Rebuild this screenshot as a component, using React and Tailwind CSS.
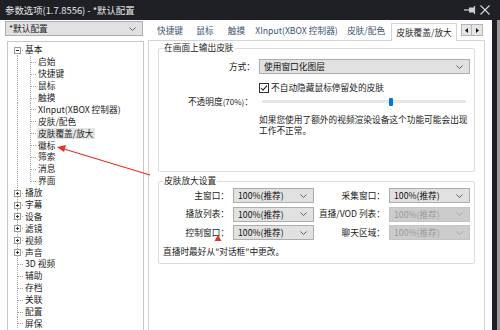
import React from 'react';

const tree = [
  { t: '基本', lvl: 0, box: 'minus', first: true },
  { t: '启始', lvl: 1 },
  { t: '快捷键', lvl: 1 },
  { t: '鼠标', lvl: 1 },
  { t: '触摸', lvl: 1 },
  { t: 'XInput(XBOX 控制器)', lvl: 1 },
  { t: '皮肤/配色', lvl: 1 },
  { t: '皮肤覆盖/放大', lvl: 1, sel: true },
  { t: '徽标', lvl: 1 },
  { t: '筛索', lvl: 1 },
  { t: '消息', lvl: 1 },
  { t: '界面', lvl: 1, last: true },
  { t: '播放', lvl: 0, box: 'plus' },
  { t: '字幕', lvl: 0, box: 'plus' },
  { t: '设备', lvl: 0, box: 'plus' },
  { t: '滤镜', lvl: 0, box: 'plus' },
  { t: '视频', lvl: 0, box: 'plus' },
  { t: '声音', lvl: 0, box: 'plus' },
  { t: '3D 视频', lvl: 0 },
  { t: '辅助', lvl: 0 },
  { t: '存档', lvl: 0 },
  { t: '关联', lvl: 0 },
  { t: '配置', lvl: 0 },
  { t: '屏保', lvl: 0 },
];

const tabs = [
  { t: '快捷键', w: 'w-[38px]' },
  { t: '鼠标', w: 'w-[32px]' },
  { t: '触摸', w: 'w-[31px]' },
  { t: 'XInput(XBOX 控制器)', w: 'w-[89px]' },
  { t: '皮肤/配色', w: 'w-[50px]' },
];

function Gutter({ lvl, box, first, last }) {
  const w = lvl ? 29 : 16;
  const dot = { stroke: '#a3a3a3', strokeDasharray: '1 1' };
  return (
    <svg width={w} height="12" className="shrink-0">
      <line x1="9.5" y1={first ? 7 : 0} x2="9.5" y2="12" {...dot} />
      {lvl === 0 && <line x1="10" y1="6.5" x2="16" y2="6.5" {...dot} />}
      {lvl === 1 && (
        <>
          <line x1="22.5" y1="0" x2="22.5" y2={last ? 7 : 12} {...dot} />
          <line x1="23" y1="6.5" x2="29" y2="6.5" {...dot} />
        </>
      )}
      {box && (
        <>
          <rect x="6.5" y="3.5" width="6" height="6" fill="#fff" stroke="#9a9a9a" />
          <line x1="8" y1="6.5" x2="11" y2="6.5" stroke="#333" />
          {box === 'plus' && <line x1="9.5" y1="5" x2="9.5" y2="8" stroke="#333" />}
        </>
      )}
    </svg>
  );
}

function Chevron({ color = '#606060' }) {
  return (
    <svg width="7" height="4" className="shrink-0">
      <path d="M0.5 0.5 L3.5 3.5 L6.5 0.5" fill="none" stroke={color} />
    </svg>
  );
}

function Select({ text, w, disabled }) {
  return (
    <div
      className={
        'flex items-center justify-between h-[15px] pl-[4px] pr-[6px] border ' +
        w +
        (disabled ? ' bg-[#cccccc] border-[#c4c4c4] text-[#9a9a9a]' : ' bg-[#e1e1e1] border-[#adadad] text-[#111]')
      }
    >
      <span className="leading-[13px]">{text}</span>
      <Chevron color={disabled ? '#a8a8a8' : '#606060'} />
    </div>
  );
}

export default function App() {
  return (
    <div className="relative w-[500px] h-[330px] overflow-hidden bg-white flex flex-col font-['Noto_Sans_CJK_SC',sans-serif] text-[8.7px] text-[#1a1a1a]">
      {/* title bar */}
      <div className="h-[20px] shrink-0 bg-[#1e2026] flex items-center justify-between pl-[5px] pr-[10px] text-[#e8e8e8] text-[9.4px]">
        <span>参数选项(1.7.8556) - *默认配置</span>
        <div className="flex items-center gap-[4px]">
          <svg width="12" height="8">
            <path d="M0 4 H5" stroke="#cfcfcf" strokeWidth="1.2" />
            <rect x="5" y="1.5" width="5" height="5" fill="#cfcfcf" />
            <path d="M10.5 0 V8" stroke="#cfcfcf" strokeWidth="1.2" />
          </svg>
          <svg width="10" height="10">
            <path d="M0.5 0.5 L9.5 9.5 M9.5 0.5 L0.5 9.5" stroke="#d8d8d8" strokeWidth="1.1" />
          </svg>
        </div>
      </div>

      <div className="flex flex-1 min-h-0">
        {/* left column */}
        <div className="w-[148px] shrink-0 pl-[5px] pt-[1px] flex flex-col">
          <div className="w-[138px] h-[15px] bg-[#e1e1e1] border border-[#adadad] flex items-center justify-between pl-[3px] pr-[6px]">
            <span className="leading-[13px]">*默认配置</span>
            <Chevron />
          </div>
          <div className="ml-[2px] mt-[5px] w-[137px] flex-1 border border-b-0 border-[#c8c8c8] pt-[2px]">
            {tree.map((r, i) => (
              <div key={i} className="flex items-center h-[11.9px]">
                <Gutter {...r} />
                <span className={'leading-[11px] px-[1px] whitespace-nowrap ' + (r.sel ? 'bg-[#e5e5e5]' : '')}>{r.t}</span>
              </div>
            ))}
          </div>
        </div>

        {/* tabs + page */}
        <div className="w-[337px] shrink-0 flex flex-col">
          <div className="h-[20px] shrink-0 flex items-end pl-[3px] relative z-10">
            {tabs.map((t) => (
              <div key={t.t} className={'h-[18px] flex items-center justify-center text-[#3b5371] whitespace-nowrap ' + t.w}>
                {t.t}
              </div>
            ))}
            <div className="w-[66px] h-[18px] -mb-px bg-white border border-b-0 border-[#d4d4d4] flex items-center justify-center whitespace-nowrap">
              皮肤覆盖/放大
            </div>
            <div className="ml-[4px] mb-[4px] flex self-end">
              <div className="w-[11px] h-[12px] bg-[#e6e6e6] border border-[#b5b5b5] flex items-center justify-center">
                <svg width="3" height="5"><path d="M3 0 L0 2.5 L3 5 Z" fill="#111" /></svg>
              </div>
              <div className="w-[11px] h-[12px] bg-[#e6e6e6] border border-l-0 border-[#b5b5b5] flex items-center justify-center">
                <svg width="3" height="5"><path d="M0 0 L3 2.5 L0 5 Z" fill="#111" /></svg>
              </div>
            </div>
          </div>

          <div className="flex-1 border border-b-0 border-[#d4d4d4] pl-[9px] pt-[1px]">
            <fieldset className="w-[317px] h-[130px] border border-[#dcdcdc] rounded-[2px]">
              <legend className="ml-[4px] px-[1px] leading-[12px]">在画面上输出皮肤</legend>
              <div className="pt-[5px] flex flex-col">
                <div className="flex items-center h-[15px]">
                  <div className="w-[97px] text-right pr-[1px]">方式：</div>
                  <div className="ml-[3px]">
                    <Select text="使用窗口化图层" w="w-[211px]" />
                  </div>
                </div>
                <div className="flex items-center h-[12px] mt-[8px] pl-[100px]">
                  <svg width="10" height="10" className="shrink-0">
                    <rect x="0.5" y="0.5" width="9" height="9" fill="#fff" stroke="#333" />
                    <path d="M2 5 L4 7.2 L8 2.6" fill="none" stroke="#222" strokeWidth="1.1" />
                  </svg>
                  <span className="ml-[2px] leading-[12px]">不自动隐藏鼠标停留处的皮肤</span>
                </div>
                <div className="flex items-center h-[13px] mt-[1px]">
                  <div className="w-[97px] text-right pr-[3px] whitespace-nowrap">
                    不透明度<span className="text-[8px]">(70%)</span>：
                  </div>
                  <div className="ml-[6px] relative w-[204px] h-[10px] flex items-center">
                    <div className="w-full h-[3px] bg-[#e7e7e7]" />
                    <div className="absolute left-[127px] top-[1px] w-[4px] h-[8px] bg-[#0078d7] rounded-[1px]" />
                  </div>
                </div>
                <div className="mt-[6px] pl-[100px] leading-[11px] w-[312px]">
                  如果您使用了额外的视频渲染设备这个功能可能会出现工作不正常。
                </div>
              </div>
            </fieldset>

            <fieldset className="mt-[3px] w-[317px] h-[89px] border border-[#dcdcdc] rounded-[2px]">
              <legend className="ml-[4px] px-[1px] leading-[12px]">皮肤放大设置</legend>
              <div className="pt-[1px] flex flex-col gap-[3.5px]">
                {[
                  ['主窗口：', '采集窗口：', false],
                  ['播放列表：', '直播/VOD 列表：', true],
                  ['控制窗口：', '聊天区域：', true],
                ].map(([a, b, dis]) => (
                  <div key={a} className="flex items-center h-[15px]">
                    <div className="w-[74px] text-right pr-[4px] whitespace-nowrap">{a}</div>
                    <Select text="100%(推荐)" w="w-[81px]" />
                    <div className="w-[75px] text-right pr-[4px] whitespace-nowrap">{b}</div>
                    <Select text="100%(推荐)" w="w-[81px]" disabled={dis} />
                  </div>
                ))}
              </div>
              <div className="mt-[5.5px] pl-[4px] leading-[11px]">直播时最好从"对话框"中更改。</div>
            </fieldset>
          </div>
        </div>

        {/* right edge */}
        <div className="w-[7px] shrink-0 bg-white" />
        <div className="w-[5px] shrink-0 bg-[#1e2026]" />
        <div className="w-[3px] shrink-0 bg-[#9a9a9a]" />
      </div>

      {/* red annotation arrows */}
      <svg className="absolute left-0 top-0 pointer-events-none" width="500" height="330">
        <line x1="150" y1="175" x2="64" y2="149" stroke="#e8302a" strokeWidth="1.3" />
        <path d="M57 147 L66 145 L64 152 Z" fill="#e8302a" />
        <path d="M218 235 L221.5 241 L214.5 241 Z" fill="#e8302a" />
      </svg>
    </div>
  );
}
